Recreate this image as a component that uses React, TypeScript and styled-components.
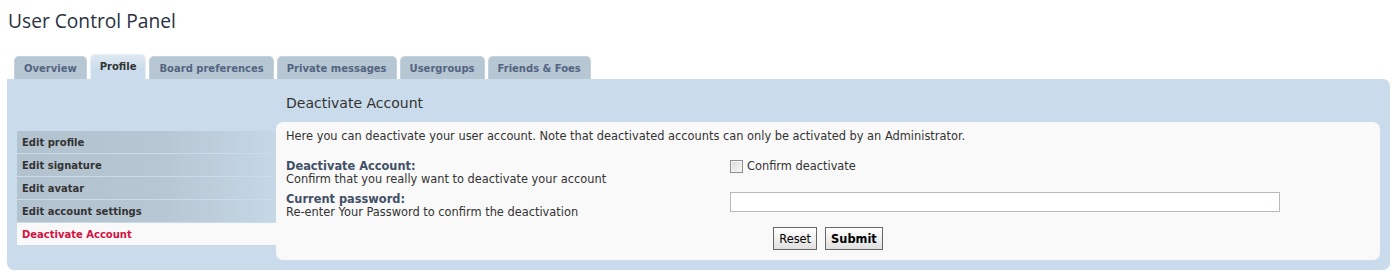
import React from 'react'
import styled, { createGlobalStyle } from 'styled-components'

//// styles
const GlobalStyle = createGlobalStyle`
  html, body {
    margin: 0;
    padding: 0;
    background: #ffffff;
  }
  body {
    font-family: "DejaVu Sans", Verdana, sans-serif;
    font-size: 11.4px;
    color: #333333;
  }
`

const Page = styled.div`
  width: 1398px;
  height: 280px;
  padding: 0 8px 0 7px;
  box-sizing: border-box;
`

const Title = styled.h2`
  margin: 0;
  padding: 9px 0 0 1px;
  height: 54px;
  box-sizing: border-box;
  font-family: "Open Sans", "DejaVu Sans", sans-serif;
  font-size: 19.2px;
  font-weight: normal;
  line-height: 24px;
  color: #28313f;
`

const Tabs = styled.ul`
  list-style: none;
  margin: 0 0 0 7px;
  padding: 0;
  display: flex;
  align-items: flex-end;
  gap: 3px;
  height: 25px;
`

const Tab = styled.li<{ $active?: boolean }>`
  height: ${p => (p.$active ? 25 : 23)}px;
  padding: ${p => (p.$active ? '0 0 2px' : '0')} 0;
  padding-left: 9px;
  padding-right: 9px;
  box-sizing: border-box;
  display: flex;
  align-items: center;
  justify-content: center;
  border-radius: 5px 5px 0 0;
  background: ${p =>
    p.$active ? 'linear-gradient(to bottom, #dde8f1 0%, #cadceb 60%)' : '#b6c6d3'};
  border: 1px solid ${p => (p.$active ? '#e6eef5' : '#c4d2dd')};
  border-bottom: none;
  font-weight: bold;
  font-size: 10px;
  color: ${p => (p.$active ? '#333333' : '#536482')};
  cursor: pointer;
`

const Panel = styled.div`
  display: flex;
  align-items: flex-start;
  background: #cadceb;
  border-radius: 0 7px 7px 7px;
  padding: 0 10px 10px 10px;
`

const SideNav = styled.ul`
  list-style: none;
  margin: 52px 0 0 0;
  padding: 0;
  width: 259px;
  flex: 0 0 auto;
`

const NavItem = styled.li<{ $active?: boolean }>`
  height: 23px;
  box-sizing: border-box;
  padding-left: 5px;
  display: flex;
  align-items: center;
  font-weight: bold;
  font-size: 10px;
  color: ${p => (p.$active ? '#d31141' : '#333333')};
  background: ${p =>
    p.$active
      ? '#f9f9f9'
      : 'linear-gradient(to right, #b2c2cf 0%, #b6c6d3 55%, #c6d7e5 100%)'};
  background-clip: padding-box;
  border-bottom: 1px solid #cadceb;
  &:last-child {
    height: 22px;
    border-bottom: none;
  }
  cursor: pointer;
`

const Main = styled.div`
  flex: 1 1 auto;
  display: flex;
  flex-direction: column;
`

const Heading = styled.h3`
  margin: 0;
  height: 43px;
  box-sizing: border-box;
  padding: 15px 10px 0 10px;
  font-family: "DejaVu Sans", Verdana, sans-serif;
  font-size: 14px;
  font-weight: normal;
  line-height: 18px;
  color: #333333;
`

const Content = styled.div`
  background: #f9f9f9;
  border-radius: 7px;
  padding: 8px 10px 10px 10px;
`

const Intro = styled.p`
  margin: 0 0 17px 0;
  line-height: 13px;
`

const Field = styled.dl`
  display: grid;
  grid-template-columns: 444px 1fr;
  margin: 0 0 7px 0;
`

const Label = styled.dt`
  line-height: 13px;
  & > label {
    display: block;
    font-weight: bold;
    color: #425067;
  }
`

const Value = styled.dd`
  margin: 0;
  display: flex;
  align-items: flex-start;
`

const CheckLabel = styled.label`
  display: flex;
  align-items: center;
  gap: 4px;
  line-height: 13px;
  margin-top: 0;
`

const Checkbox = styled.input`
  appearance: none;
  width: 13px;
  height: 13px;
  margin: 0;
  box-sizing: border-box;
  border: 1px solid #8f8f8f;
  background: linear-gradient(135deg, #dcdcdc, #f6f6f6);
  box-shadow: inset 0 0 0 1px #f4f4f4;
`

const TextInput = styled.input`
  width: 550px;
  height: 20px;
  margin-top: -1px;
  box-sizing: border-box;
  border: 1px solid #b4bac0;
  background: #ffffff;
  padding: 2px;
  font-family: inherit;
  font-size: 11px;
`

const Actions = styled.div`
  display: flex;
  justify-content: center;
  gap: 8px;
  margin-top: 8px;
`

const Button = styled.button<{ $primary?: boolean }>`
  height: 23px;
  padding: 0 5px;
  border: 1px solid #666666;
  background: linear-gradient(to bottom, #ffffff 0%, #e0e0e0 100%);
  font-family: inherit;
  font-size: 11.4px;
  font-weight: ${p => (p.$primary ? 'bold' : 'normal')};
  color: #000000;
  cursor: pointer;
`

//// data
const tabs = ['Overview', 'Profile', 'Board preferences', 'Private messages', 'Usergroups', 'Friends & Foes']
const navItems = ['Edit profile', 'Edit signature', 'Edit avatar', 'Edit account settings', 'Deactivate Account']

const App: React.FC = () => {
  return (
    <Page>
      <GlobalStyle />
      <Title>User Control Panel</Title>
      <Tabs>
        {tabs.map(t => (
          <Tab key={t} $active={t === 'Profile'}>
            {t}
          </Tab>
        ))}
      </Tabs>
      <Panel>
        <SideNav>
          {navItems.map(n => (
            <NavItem key={n} $active={n === 'Deactivate Account'}>
              {n}
            </NavItem>
          ))}
        </SideNav>
        <Main>
          <Heading>Deactivate Account</Heading>
          <Content>
            <Intro>
              Here you can deactivate your user account. Note that deactivated accounts can only be activated by an
              Administrator.
            </Intro>
            <Field>
              <Label>
                <label htmlFor="confirm">Deactivate Account:</label>
                <span>Confirm that you really want to deactivate your account</span>
              </Label>
              <Value>
                <CheckLabel>
                  <Checkbox type="checkbox" id="confirm" />
                  Confirm deactivate
                </CheckLabel>
              </Value>
            </Field>
            <Field>
              <Label>
                <label htmlFor="password">Current password:</label>
                <span>Re-enter Your Password to confirm the deactivation</span>
              </Label>
              <Value>
                <TextInput type="password" id="password" />
              </Value>
            </Field>
            <Actions>
              <Button type="reset">Reset</Button>
              <Button type="submit" $primary>
                Submit
              </Button>
            </Actions>
          </Content>
        </Main>
      </Panel>
    </Page>
  )
}

export default App
